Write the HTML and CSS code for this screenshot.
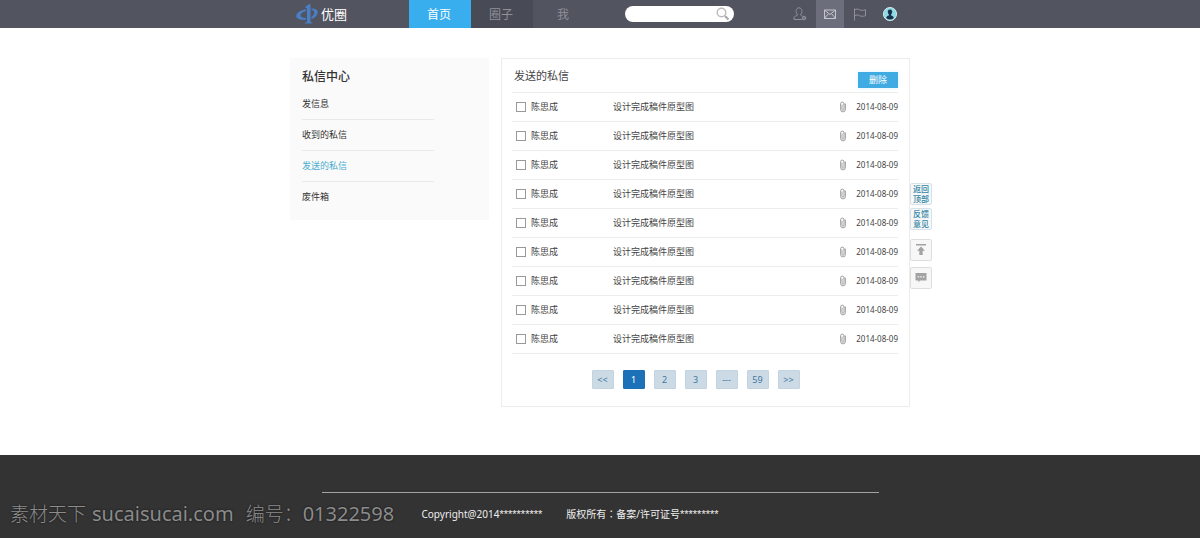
FILE: index.html
```html
<!DOCTYPE html>
<html lang="zh-CN">
<head>
<meta charset="utf-8">
<meta name="viewport" content="width=device-width, initial-scale=1">
<title>发送的私信</title>
<link rel="stylesheet" href="styles.css">
</head>
<body>
<svg class="defs" aria-hidden="true">
  <symbol id="clip" viewBox="0 0 8 12"><path d="M3 4v4.300a1 1 0 0 0 2 0V3.200M5 3.200V2.800a1.700 1.700 0 0 0-3.400 0v5.700a2.400 2.400 0 0 0 4.800 0V3" fill="none" stroke="#888" stroke-width=".8" stroke-linecap="round"/></symbol>
</svg>
<header class="topbar">
  <div class="wrap topbar-inner">
    <a class="brand" href="#">
      <svg class="brand-mark" viewBox="0 0 22 20" aria-hidden="true"><g fill="#4a7fc6"><path d="M9.500 2.500C11 2 12 1.300 12.500.3h2V17.500c0 .7.600 1 2 1v1H9v-1c1.400 0 2-.3 2-1V4H9.500z"/><path d="M10 5.200C4.500 6 .3 8.700.3 12c0 3 4 4.300 9.700 3.700v-1.800c-3.300.1-5.500-.7-5.500-2.600 0-1.900 2.200-3.500 5.500-4.300zM15.500 4.500c3.600-.2 6.200 1 6.200 3.400 0 3.300-2.700 5.800-6.200 7.200v-2c1.600-1.100 2.700-2.700 2.700-4.500 0-1.500-1-2.300-2.700-2.500z"/></g></svg>
      <span>优圈</span>
    </a>
    <nav class="nav">
      <a class="nav-item is-active" href="#">首页</a>
      <a class="nav-item is-dark" href="#">圈子</a>
      <a class="nav-item" href="#">我</a>
    </nav>
    <form class="search" role="search">
      <input class="search-input" type="search" aria-label="搜索">
      <button class="search-button" type="button" aria-label="搜索"><svg viewBox="0 0 14 14"><circle cx="5.500" cy="5.500" r="4.300" fill="none" stroke="#bbb" stroke-width="1.400"/><path d="M9 9l3.500 3.500" stroke="#aaa" stroke-width="2.200"/></svg></button>
    </form>
    <div class="tools">
      <a class="tool" href="#" aria-label="好友"><svg viewBox="0 0 14 14"><g fill="none" stroke="#8f909b"><path d="M9 12.500H1v-2C1 9.300 3.600 8.900 4.600 8 3.300 6.500 2.800 4.900 3.100 3.500 3.400 1.900 4.500.800 6 .800s2.600 1.100 2.900 2.700C9.200 4.900 8.700 6.500 7.500 8c.5.500 1 .7 1.700.9"/><circle cx="11" cy="11" r="1.800" fill="#777883"/></g></svg></a>
      <a class="tool is-active" href="#" aria-label="私信"><svg viewBox="0 0 14 14"><g fill="none" stroke="#c4c5cd"><path d="M1.500 3h11v8.500h-11zM1.500 3 7 7.500 12.500 3M1.500 11.500l4-5M12.500 11.500l-4-5"/></g></svg></a>
      <a class="tool" href="#" aria-label="标记"><svg viewBox="0 0 14 14"><path d="M1.500 1.500v12M1.500 2.800c2-1 3.700-.8 5.200 0s3.200.8 5.800-.1v6c-2.600.9-4.300.8-5.800 0s-3.200-.9-5.200 0" fill="none" stroke="#8f909b"/></svg></a>
      <a class="tool" href="#" aria-label="我的账户"><svg viewBox="0 0 14 14"><circle cx="7" cy="7" r="6.600" fill="#8fd9e3" stroke="#e6f7f9" stroke-width=".8"/><path d="M7 2.600c1.700 0 2.300 1.200 2.200 2.500-.1 1-.5 1.900-1.100 2.400v.9c1.300.4 2.500.8 2.700 2.500A5.500 5.500 0 0 1 7 12.500a5.500 5.500 0 0 1-3.800-1.600c.2-1.700 1.400-2.100 2.700-2.500v-.9c-.6-.5-1-1.400-1.100-2.400C4.700 3.800 5.300 2.600 7 2.600z" fill="#17324d"/></svg></a>
    </div>
  </div>
</header>

<main class="wrap content">
  <aside class="sidebar">
    <h2 class="sidebar-title">私信中心</h2>
    <ul class="menu">
      <li><a href="#">发信息</a></li>
      <li><a href="#">收到的私信</a></li>
      <li><a class="is-current" href="#">发送的私信</a></li>
      <li><a href="#">废件箱</a></li>
    </ul>
  </aside>

  <section class="panel">
    <div class="panel-head">
      <h1 class="panel-title">发送的私信</h1>
      <button class="delete" type="button">删除</button>
    </div>
    <table class="mails">
      <tbody>
        <tr><td class="check"><input type="checkbox" id="m1"></td><td class="name"><label for="m1">陈思成</label></td><td>设计完成稿件原型图</td><td class="file"><svg><use href="#clip"/></svg></td><td class="date">2014-08-09</td></tr>
        <tr><td class="check"><input type="checkbox" id="m2"></td><td class="name"><label for="m2">陈思成</label></td><td>设计完成稿件原型图</td><td class="file"><svg><use href="#clip"/></svg></td><td class="date">2014-08-09</td></tr>
        <tr><td class="check"><input type="checkbox" id="m3"></td><td class="name"><label for="m3">陈思成</label></td><td>设计完成稿件原型图</td><td class="file"><svg><use href="#clip"/></svg></td><td class="date">2014-08-09</td></tr>
        <tr><td class="check"><input type="checkbox" id="m4"></td><td class="name"><label for="m4">陈思成</label></td><td>设计完成稿件原型图</td><td class="file"><svg><use href="#clip"/></svg></td><td class="date">2014-08-09</td></tr>
        <tr><td class="check"><input type="checkbox" id="m5"></td><td class="name"><label for="m5">陈思成</label></td><td>设计完成稿件原型图</td><td class="file"><svg><use href="#clip"/></svg></td><td class="date">2014-08-09</td></tr>
        <tr><td class="check"><input type="checkbox" id="m6"></td><td class="name"><label for="m6">陈思成</label></td><td>设计完成稿件原型图</td><td class="file"><svg><use href="#clip"/></svg></td><td class="date">2014-08-09</td></tr>
        <tr><td class="check"><input type="checkbox" id="m7"></td><td class="name"><label for="m7">陈思成</label></td><td>设计完成稿件原型图</td><td class="file"><svg><use href="#clip"/></svg></td><td class="date">2014-08-09</td></tr>
        <tr><td class="check"><input type="checkbox" id="m8"></td><td class="name"><label for="m8">陈思成</label></td><td>设计完成稿件原型图</td><td class="file"><svg><use href="#clip"/></svg></td><td class="date">2014-08-09</td></tr>
        <tr><td class="check"><input type="checkbox" id="m9"></td><td class="name"><label for="m9">陈思成</label></td><td>设计完成稿件原型图</td><td class="file"><svg><use href="#clip"/></svg></td><td class="date">2014-08-09</td></tr>
      </tbody>
    </table>
    <nav class="pager" aria-label="分页">
      <a href="#">&lt;&lt;</a>
      <a class="is-current" href="#">1</a>
      <a href="#">2</a>
      <a href="#">3</a>
      <a href="#">---</a>
      <a href="#">59</a>
      <a href="#">&gt;&gt;</a>
    </nav>
  </section>

  <div class="float-tools">
    <button class="float-text" type="button">返回<br>顶部</button>
    <button class="float-text" type="button">反馈<br>意见</button>
    <button class="float-icon" type="button" aria-label="返回顶部"><svg viewBox="0 0 12 12"><path d="M1 0h10v1.500H1zM6 2.500l4 4.300H7.700V11H4.300V6.800H2z" fill="#a3a3a3"/></svg></button>
    <button class="float-icon" type="button" aria-label="反馈意见"><svg viewBox="0 0 12 12"><path d="M.5 1h11v7.500H5L3.500 10.500V8.500h-3z" fill="#a3a3a3"/><path d="M2.700 4.300h1.500v1.200H2.700zM5.300 4.300h1.500v1.200H5.300zM7.900 4.300h1.500v1.200H7.900z" fill="#f7f7f7"/></svg></button>
  </div>
</main>

<footer class="footer">
  <div class="footer-inner">
    <span>Copyright@2014<span class="stars">**********</span></span>
    <span>版权所有<span class="colon" lang="zh-TW">：</span>备案/许可证号<span class="stars">*********</span></span>
  </div>
  <p class="watermark"><span class="watermark-cn">素材天下</span><span>sucaisucai.com</span><span class="watermark-cn watermark-label">编号：</span><span>01322598</span></p>
</footer>
</body>
</html>
```
FILE: styles.css
```css
* { box-sizing: border-box; }

body {
  margin: 0;
  min-height: 100vh;
  display: flex;
  flex-direction: column;
  background: #fff;
  color: #444;
  font-family: "Noto Sans", "Noto Sans CJK SC", sans-serif;
  font-size: 9px;
  line-height: 12px;
}

a { color: inherit; text-decoration: none; }
button, input { font: inherit; margin: 0; }
svg { display: block; }
.defs { position: absolute; width: 0; height: 0; }

.wrap { width: 100%; max-width: 620px; margin: 0 auto; }

.topbar { background: #525460; }
.topbar-inner { display: flex; align-items: stretch; height: 28px; }
.brand {
  display: flex;
  align-items: center;
  gap: 3px;
  width: 119px;
  padding-left: 6px;
  color: #fff;
  font-size: 13px;
}
.brand-mark { width: 22px; height: 20px; }
.nav { display: flex; }
.nav-item {
  display: flex;
  align-items: center;
  justify-content: center;
  width: 62px;
  padding: 1px 2px 0 0;
  color: #8f909b;
  font-size: 12px;
}
.nav-item.is-active { background: #38aeee; color: #fff; }
.nav-item.is-dark { background: #484a55; }

.search {
  display: flex;
  align-items: center;
  align-self: center;
  width: 109px;
  height: 16px;
  margin-left: 30px;
  padding: 0 4px 0 8px;
  border-radius: 8px;
  background: #fff;
}
.search-input { flex: 1; min-width: 0; height: 14px; padding: 0; border: 0; outline: 0; background: none; }
.search-button { width: 14px; height: 14px; padding: 0; border: 0; background: none; }

.tools { display: flex; margin-left: auto; padding-right: 6px; gap: 2px; }
.tool { display: flex; align-items: center; justify-content: center; width: 28px; }
.tool svg { width: 14px; height: 14px; }
.tool.is-active { background: #6c6e7b; }

.content {
  position: relative;
  flex: 1;
  display: flex;
  align-items: flex-start;
  gap: 12px;
  padding: 30px 0 48px;
}

.sidebar { flex: 0 0 199px; padding: 12px 12px 8px; background: #fafafa; }
.sidebar-title { margin: 0; font-size: 12px; font-weight: 500; line-height: 14px; color: #333; }
.menu { width: 132px; margin: 5px 0 0; padding: 0; list-style: none; }
.menu li { border-bottom: 1px solid #e8e8e8; }
.menu li:last-child { border-bottom: 0; }
.menu a { display: block; line-height: 30px; color: #333; }
.menu a.is-current { color: #48acd0; }

.panel { flex: 1; min-width: 0; padding: 0 11px 17px 10px; border: 1px solid #ececec; }
.panel-head {
  display: flex;
  justify-content: space-between;
  align-items: flex-end;
  height: 34px;
  padding-bottom: 4px;
  border-bottom: 1px solid #ececec;
}
.panel-title { margin: 0; padding: 0 0 3px 2px; font-size: 11px; font-weight: 400; line-height: 18px; }
.delete {
  width: 40px;
  height: 16px;
  padding: 0;
  border: 0;
  background: #40aae2;
  color: #fff;
  line-height: 16px;
  box-shadow: 0 0 4px #d5f3fd;
}

.mails { width: 100%; border-collapse: separate; border-spacing: 0; }
.mails td { height: 29px; padding: 0; border-bottom: 1px solid #ececec; }
.check { width: 19px; }
.check input {
  display: block;
  appearance: none;
  width: 10px;
  height: 10px;
  margin-left: 4px;
  border: 1px solid #999;
  background: #fff;
}
.check input:checked { background: #40aae2; }
.name { width: 82px; }
.file { width: 17px; }
.file svg { width: 8px; height: 12px; }
.date { width: 42px; font-size: 8px; text-align: right; white-space: nowrap; }

.pager { display: flex; justify-content: center; gap: 9px; margin-top: 16px; padding-right: 19px; }
.pager a {
  width: 22px;
  border: 1px solid #c3d3df;
  border-radius: 1px;
  background: #ccdae5;
  color: #41779f;
  line-height: 17px;
  text-align: center;
}
.pager a.is-current { border-color: #1b6fb4; background: #1b72b8; color: #fff; }

.float-tools {
  position: absolute;
  top: 155px;
  left: 100%;
  display: grid;
  gap: 3px;
}
.float-tools button {
  width: 22px;
  height: 22px;
  padding: 0;
  border: 1px solid #dedede;
  border-radius: 2px;
  background: #f7f7f7;
}
.float-tools .float-text { border-color: #d5e3e9; color: #2f86a5; font-size: 8px; font-weight: 500; line-height: 10px; }
.float-icon { display: flex; align-items: center; justify-content: center; margin-top: 6px; }
.float-icon + .float-icon { margin-top: 3px; }
.float-icon svg { width: 12px; height: 12px; }

.footer { position: relative; padding: 37px 24px 14px; background: #333; color: #eee; }
.footer-inner {
  display: flex;
  gap: 24px;
  max-width: 557px;
  margin: 0 auto;
  padding: 11px 0 0 100px;
  border-top: 1px solid #a0a59f;
  font-size: 10px;
  line-height: 20px;
}
.stars { font-family: "Liberation Sans", sans-serif; font-size: 11px; }
.colon { font-family: "Noto Sans CJK TC", sans-serif; }
.watermark {
  position: absolute;
  left: 10px;
  bottom: 10px;
  display: flex;
  align-items: center;
  margin: 0;
  color: #8c8c8c;
  font-size: 20px;
  line-height: 28px;
  white-space: nowrap;
  text-shadow: 0 0 2px #111;
}
.watermark-cn { margin-right: 6px; font-size: 19px; font-weight: 300; }
.watermark-label { margin: 0 0 0 12px; }
```
